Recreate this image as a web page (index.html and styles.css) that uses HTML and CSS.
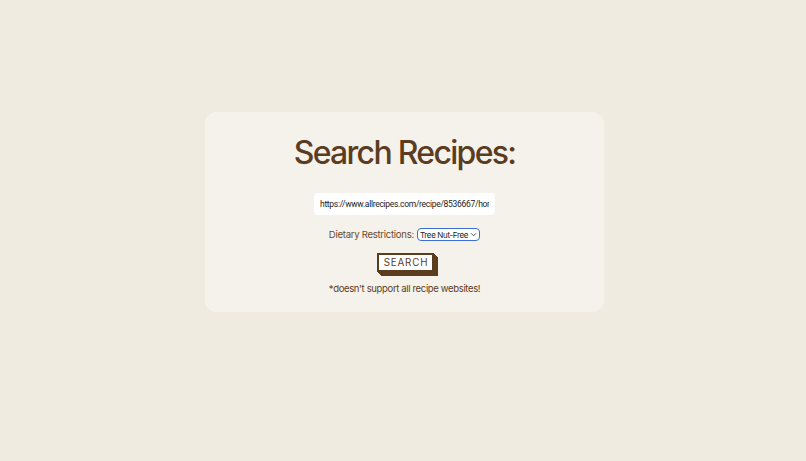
FILE: index.html
```html
<!DOCTYPE html>
<html lang="en">
<head>
<meta charset="utf-8">
<title>Search Recipes</title>
<link rel="stylesheet" href="styles.css">
</head>
<body>
<main class="card">
  <h1 class="title">Search Recipes:</h1>
  <input class="url" type="text" value="https://www.allrecipes.com/recipe/8536667/homemade-pasta">
  <div class="diet">
    <label class="diet-label" for="diet">Dietary Restrictions:</label>
    <span class="select">Tree Nut-Free
      <svg class="chev" viewBox="0 0 8 6" width="7" height="5"><path d="M1 1.5 L4 4.5 L7 1.5" fill="none" stroke="#333" stroke-width="1"/></svg>
    </span>
  </div>
  <button class="search">SEARCH</button>
  <p class="note">*doesn't support all recipe websites!</p>
</main>
</body>
</html>
```

FILE: styles.css
```css
html, body { margin: 0; padding: 0; }
body {
  background: #f0ebe0;
  font-family: "Inter", "Noto Sans", sans-serif;
  color: #5b3c1f;
  height: 461px;
  display: flex;
  justify-content: center;
  align-items: flex-start;
  padding-top: 112px;
  box-sizing: border-box;
}
.card {
  width: 399px;
  height: 200px;
  box-sizing: border-box;
  background: #f5f2ec;
  border-radius: 12px;
  margin-left: 3px;
  display: flex;
  flex-direction: column;
  align-items: center;
  padding-top: 21px;
}
.title {
  margin: 0;
  font-size: 32px;
  font-weight: 500;
  letter-spacing: -1.7px;
  line-height: 40px;
  color: #5b3c1f;
}
.url {
  margin-top: 20px;
  width: 181px;
  height: 22px;
  box-sizing: border-box;
  border: none;
  border-radius: 4px;
  background: #ffffff;
  padding: 0 6px;
  font-family: "Roboto", "Inter", sans-serif;
  font-size: 8.5px;
  letter-spacing: -0.3px;
  color: #222;
  outline: none;
}
.diet {
  margin-top: 13px;
  display: flex;
  align-items: center;
  gap: 3px;
  font-size: 9.6px;
  letter-spacing: -0.3px;
  color: #6a4a2e;
}
.select {
  display: inline-flex;
  align-items: center;
  gap: 2px;
  height: 11px;
  padding: 0 2px 0 2px;
  border: 1.3px solid #3b6fd8;
  border-radius: 4px;
  font-size: 8px;
  color: #222;
  background: #fff;
  letter-spacing: -0.35px;
}
.chev { display: block; }
.search {
  margin-top: 12px;
  width: 57px;
  height: 19px;
  padding: 0 0 0 1px;
  background: #fff;
  border: 2px solid #5b3c1f;
  box-shadow: 1px 1px 0 #5b3c1f, 2px 2px 0 #5b3c1f, 3px 3px 0 #5b3c1f, 4px 4px 0 #5b3c1f;
  font-family: "Inter", sans-serif;
  font-size: 9.8px;
  letter-spacing: 0.8px;
  color: #5b3c1f;
  margin-left: 2px;
}
.note {
  margin: 11px 0 0;
  font-size: 9.5px;
  letter-spacing: -0.35px;
  color: #5b3c1f;
}
```
